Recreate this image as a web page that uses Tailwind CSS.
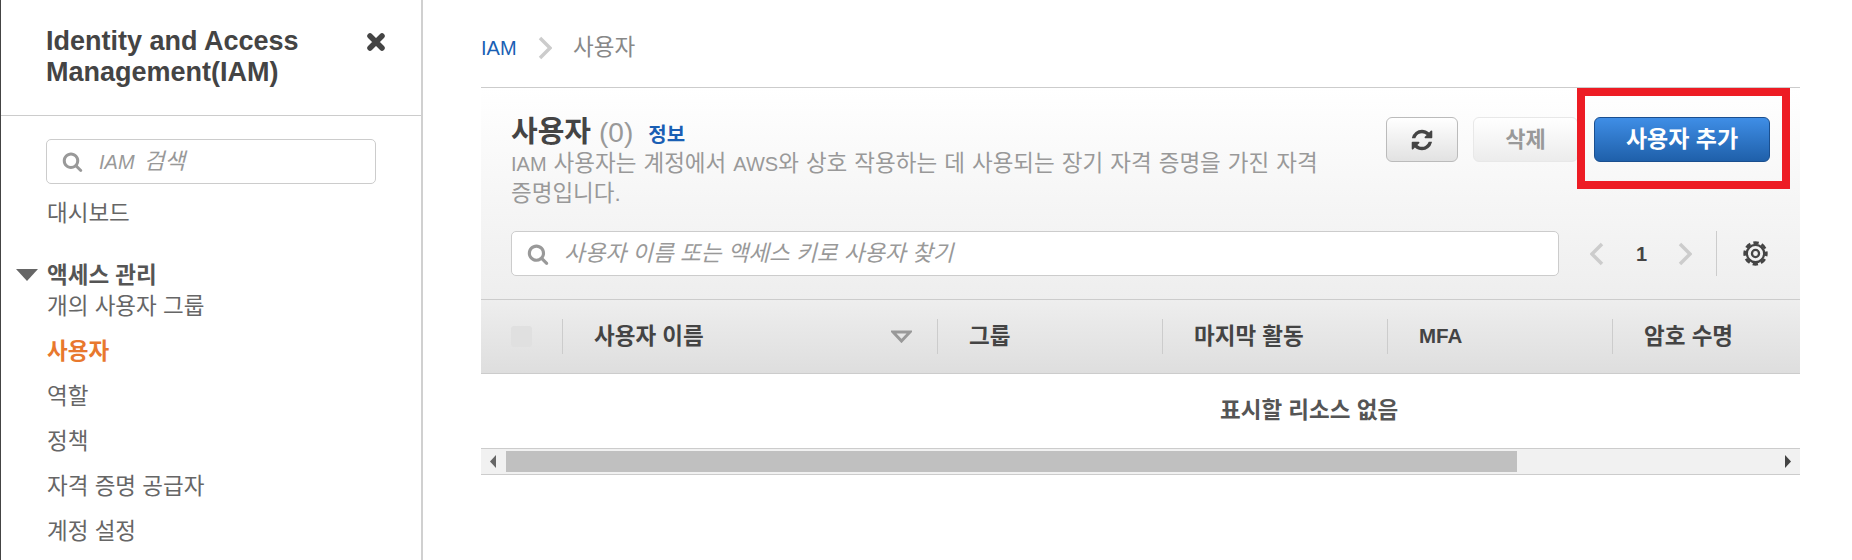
<!DOCTYPE html>
<html lang="ko">
<head>
    <meta charset="UTF-8">
    <title>IAM 사용자</title>
    <script src="https://cdn.jsdelivr.net/npm/@tailwindcss/browser@4"></script>
</head>
<body class="h-[560px] overflow-hidden bg-white font-['Liberation_Sans','Noto_Sans_CJK_KR',sans-serif] text-[22.5px] text-[#444]">
    <div class="flex h-[560px]">
        <!-- Sidebar -->
        <aside class="w-[423px] shrink-0 border-l border-r-2 border-l-[#444] border-r-[#d0d0d0]">
            <div class="h-[116px] border-b border-[#ccc] pl-[45px] pr-[35px] pt-[26px] flex justify-between">
                <h1 class="w-[300px] text-[27px] leading-[31px] font-bold text-[#444]">Identity and Access Management(IAM)</h1>
                <svg class="mt-[6px] w-[20px] h-[20px]" viewBox="0 0 20 20"><path d="M4 4L16 16M16 4L4 16" stroke="#444" stroke-width="5.5" stroke-linecap="round"/></svg>
            </div>
            <div class="mx-[45px] mt-[23px] h-[45px] w-[330px] border border-[#ccc] rounded-[5px] flex items-center pl-[15px] gap-[16px]">
                <svg class="w-[21px] h-[21px]" viewBox="0 0 1792 1792" fill="#999"><path d="M1216 832q0-185-131.5-316.5t-316.5-131.5-316.5 131.5-131.5 316.5 131.5 316.5 316.5 131.5 316.5-131.5 131.5-316.5zm512 832q0 52-38 90t-90 38q-54 0-90-38l-343-342q-179 124-399 124-143 0-273.5-55.5t-225-150-150-225-55.5-273.5 55.5-273.5 150-225 225-150 273.5-55.5 273.5 55.5 225 150 150 225 55.5 273.5q0 220-124 399l343 343q37 37 37 90z"/></svg>
                <span class="italic text-[#999] [word-spacing:3px]"><span class="text-[20px]">IAM</span> 검색</span>
            </div>
            <nav class="mt-[12px] pl-[46px] text-[#666]">
                <div class="h-[36px] leading-[36px]">대시보드</div>
                <div class="relative mt-[29px] h-[30px] leading-[30px] font-bold text-[#555]">
                    <svg class="absolute left-[-31px] top-[8px] w-[22px] h-[12px]" viewBox="0 0 22 12" fill="#666"><path d="M0 0H22L11 12Z"/></svg>
                    액세스 관리
                </div>
                <div class="h-[30px] leading-[32px]">개의 사용자 그룹</div>
                <div class="flex flex-col">
                    <div class="h-[45px] leading-[62px] font-bold text-[#e8782e]">사용자</div>
                    <div class="h-[45px] leading-[62px]">역할</div>
                    <div class="h-[45px] leading-[62px]">정책</div>
                    <div class="h-[45px] leading-[62px]">자격 증명 공급자</div>
                    <div class="h-[45px] leading-[62px]">계정 설정</div>
                </div>
            </nav>
        </aside>

        <!-- Main -->
        <main class="w-[1319px] ml-[58px] shrink-0">
            <div class="h-[87px] flex items-start pt-[34px] leading-[28px]">
                <span class="text-[#1a5fb4] text-[20px] w-[57px]">IAM</span>
                <svg class="w-[14px] h-[24px] mt-[2px]" viewBox="0 0 14 24" fill="none"><path d="M2 2L12 12L2 22" stroke="#ccc" stroke-width="3.5"/></svg>
                <span class="ml-[21px] text-[#888]">사용자</span>
            </div>

            <div class="relative h-[213px] border-t border-b border-t-[#ccc] border-b-[#ccc] bg-gradient-to-b from-white to-[#eeeeee] pl-[30px] pr-[30px]">
                <div class="flex justify-between">
                    <div class="w-[810px] pt-[27px]">
                        <div class="flex items-baseline h-[34px] leading-[34px]">
                            <span class="text-[29px] font-bold text-[#444]">사용자</span>
                            <span class="ml-[8px] text-[28px] text-[#999]">(0)</span>
                            <span class="ml-[15px] text-[20px] font-bold text-[#1a5fb4]">정보</span>
                        </div>
                        <p class="leading-[29px] text-[#999] [word-spacing:0.8px]"><span class="text-[20px]">IAM</span> 사용자는 계정에서 <span class="text-[20px]">AWS</span>와 상호 작용하는 데 사용되는 장기 자격 증명을 가진 자격 증명입니다.</p>
                    </div>
                    <div class="flex pt-[29px] gap-[15px]">
                        <button class="w-[72px] h-[45px] border border-[#bbb] rounded-[6px] bg-gradient-to-b from-white to-[#e2e2e2] flex items-center justify-center">
                            <svg class="w-[24px] h-[24px]" viewBox="0 0 1792 1792" fill="#444"><path d="M1639 1056q0 5-1 7-64 268-268 434.5t-478 166.5q-146 0-282.5-55t-243.5-157l-129 129q-19 19-45 19t-45-19-19-45v-448q0-26 19-45t45-19h448q26 0 45 19t19 45-19 45l-137 137q71 66 161 102t187 36q134 0 250-65t186-179q11-17 53-117 8-23 30-23h192q13 0 22.5 9.5t9.5 22.5zm25-800v448q0 26-19 45t-45 19h-448q-26 0-45-19t-19-45 19-45l138-138q-148-137-349-137-134 0-250 65t-186 179q-11 17-53 117-8 23-30 23h-199q-13 0-22.5-9.5t-9.5-22.5v-7q65-268 270-434.5t480-166.5q146 0 284 55.5t245 156.5l130-129q19-19 45-19t45 19 19 45z"/></svg>
                        </button>
                        <button class="w-[105px] h-[45px] border border-[#e8e8e8] rounded-[6px] bg-gradient-to-b from-white to-[#ececec] text-[22px] font-bold text-[#999]">삭제</button>
                        <button class="ml-[1px] w-[176px] h-[45px] border border-[#1a4f8f] rounded-[6px] bg-gradient-to-b from-[#3f8ee6] to-[#1f60aa] text-[23px] font-bold text-white">사용자 추가</button>
                    </div>
                </div>
                <div class="flex items-center absolute left-[30px] right-[30px] top-[143px] h-[45px]">
                    <div class="w-[1048px] h-[45px] bg-white border border-[#ccc] rounded-[5px] flex items-center pl-[15px] gap-[15px]">
                        <svg class="w-[22px] h-[22px]" viewBox="0 0 1792 1792" fill="#999"><path d="M1216 832q0-185-131.5-316.5t-316.5-131.5-316.5 131.5-131.5 316.5 131.5 316.5 316.5 131.5 316.5-131.5 131.5-316.5zm512 832q0 52-38 90t-90 38q-54 0-90-38l-343-342q-179 124-399 124-143 0-273.5-55.5t-225-150-150-225-55.5-273.5 55.5-273.5 150-225 225-150 273.5-55.5 273.5 55.5 225 150 150 225 55.5 273.5q0 220-124 399l343 343q37 37 37 90z"/></svg>
                        <span class="italic text-[#999]">사용자 이름 또는 액세스 키로 사용자 찾기</span>
                    </div>
                    <svg class="ml-[31px] w-[14px] h-[24px]" viewBox="0 0 14 24" fill="none"><path d="M12 2L2 12L12 22" stroke="#ccc" stroke-width="3.5"/></svg>
                    <span class="ml-[32px] w-[10px] text-[20px] font-bold text-[#444]">1</span>
                    <svg class="ml-[32px] w-[14px] h-[24px]" viewBox="0 0 14 24" fill="none"><path d="M2 2L12 12L2 22" stroke="#ccc" stroke-width="3.5"/></svg>
                    <div class="ml-[24px] w-px h-[45px] bg-[#ccc]"></div>
                    <svg class="ml-[26px] w-[25px] h-[25px]" viewBox="0 0 24 24" fill="none" stroke="#444"><circle cx="12" cy="12" r="8.3" stroke-width="2.2"/><circle cx="12" cy="12" r="3.4" stroke-width="2.2"/><circle cx="12" cy="12" r="10.4" stroke-width="2.6" stroke-dasharray="5.2 3" stroke-dashoffset="2.6"/></svg>
                </div>
            </div>

            <div class="h-[74px] border-b border-[#ccc] bg-gradient-to-b from-[#eeeeee] to-[#dedede] grid grid-cols-[81px_375px_225px_225px_225px_1fr] items-center font-bold text-[#444]">
                <div class="pl-[30px]"><div class="w-[21px] h-[21px] rounded-[3px] bg-[#e0e0e0]"></div></div>
                <div class="h-[35px] border-l border-[#ccc] pl-[31px] pr-[25px] flex items-center justify-between">
                    <span>사용자 이름</span>
                    <svg class="w-[21px] h-[13px]" viewBox="0 0 21 13" fill="none"><path d="M2 2H19L10.5 11Z" stroke="#999" stroke-width="3"/></svg>
                </div>
                <div class="h-[35px] border-l border-[#ccc] pl-[31px] flex items-center">그룹</div>
                <div class="h-[35px] border-l border-[#ccc] pl-[31px] flex items-center">마지막 활동</div>
                <div class="h-[35px] border-l border-[#ccc] pl-[31px] flex items-center text-[20.5px]">MFA</div>
                <div class="h-[35px] border-l border-[#ccc] pl-[31px] flex items-center">암호 수명</div>
            </div>

            <div class="h-[74px] flex items-center pl-[739px] font-bold text-[#555]">표시할 리소스 없음</div>

            <div class="h-[27px] border-t border-b border-[#ccc] bg-[#f1f1f1] flex items-center">
                <svg class="ml-[9px] w-[6px] h-[13px]" viewBox="0 0 6 13" fill="#666"><path d="M6 0V13L0 6.5Z"/></svg>
                <div class="ml-[10px] w-[1011px] h-[21px] bg-[#c0c0c0]"></div>
                <svg class="ml-auto mr-[9px] w-[6px] h-[13px]" viewBox="0 0 6 13" fill="#444"><path d="M0 0V13L6 6.5Z"/></svg>
            </div>
        </main>
    </div>

    <!-- Red annotation box -->
    <div class="absolute left-[1577px] top-[88px] w-[213px] h-[101px] border-[8px] border-[#ed1c24]"></div>
</body>
</html>
